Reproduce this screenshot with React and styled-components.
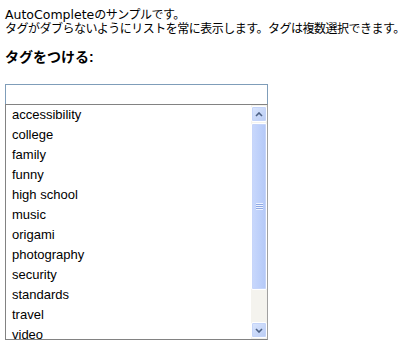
import React from 'react';
import styled, { createGlobalStyle } from 'styled-components';

const GlobalStyle = createGlobalStyle`
  html, body {
    margin: 0;
    padding: 0;
    background: #fff;
  }
  body {
    font-family: "Liberation Sans", "Noto Sans CJK JP", sans-serif;
    color: #000;
  }
`;

const Page = styled.div`
  padding: 8px 5px 0 5px;
`;

const Intro = styled.p`
  margin: 0;
  font-size: 12px;
  line-height: 14px;
  letter-spacing: -0.5px;
  white-space: nowrap;
`;

const Latin = styled.span`
  font-family: "DejaVu Sans", sans-serif;
  font-size: 12.5px;
  letter-spacing: 0;
`;

const Heading = styled.h3`
  margin: 12px 0 0 0;
  font-size: 14px;
  line-height: 18px;
  font-weight: bold;
`;

const TagBox = styled.div`
  margin-top: 18px;
  width: 263px;
`;

const TagInput = styled.input`
  display: block;
  box-sizing: border-box;
  width: 100%;
  height: 20px;
  margin: 0;
  border: 1px solid #7f9db9;
  border-bottom: none;
  padding: 0 3px;
  font-size: 13px;
  font-family: inherit;
  outline: none;
`;

const ListBox = styled.div`
  box-sizing: border-box;
  height: 236px;
  border: 1px solid #828282;
  border-right-color: #a0a0a0;
  display: flex;
  overflow: hidden;
`;

const Items = styled.ul`
  flex: 1;
  margin: 0;
  padding: 0;
  list-style: none;
  overflow: hidden;
`;

const Item = styled.li`
  height: 20px;
  line-height: 20px;
  padding-left: 6px;
  font-size: 13px;
  white-space: nowrap;
`;

const Scrollbar = styled.div`
  width: 16px;
  display: flex;
  flex-direction: column;
  background: #f4f3ee;
  padding: 1px 0 1px 0;
  box-sizing: border-box;
`;

const ArrowButton = styled.div`
  height: 16px;
  box-sizing: border-box;
  border: 1px solid #fff;
  border-radius: 2px;
  background: linear-gradient(135deg, #dae6fe, #b9cbf3);
  box-shadow: inset 0 0 0 1px #c4d4f9;
  display: flex;
  align-items: center;
  justify-content: center;
  flex-shrink: 0;
`;

const Thumb = styled.div`
  height: 167px;
  margin-top: 1px;
  box-sizing: border-box;
  border: 1px solid #fff;
  border-radius: 2px;
  background: linear-gradient(90deg, #c9d8fc, #bccffa 60%, #b4c8f6);
  box-shadow: inset 0 0 0 1px #c6d5fa;
  display: flex;
  align-items: center;
  justify-content: center;
  flex-shrink: 0;
`;

const Track = styled.div`
  flex: 1;
`;

const Grip = styled.div`
  width: 7px;
  height: 7px;
  background: repeating-linear-gradient(180deg, #eef3fe 0 1px, #8ea8e4 1px 2px);
`;

const Chevron = ({ down }) => (
  <svg width="8" height="5" viewBox="0 0 8 5">
    <path
      d={down ? 'M1 1 L4 4 L7 1' : 'M1 4 L4 1 L7 4'}
      fill="none"
      stroke="#4d6185"
      strokeWidth="1.6"
    />
  </svg>
);

const tags = [
  'accessibility',
  'college',
  'family',
  'funny',
  'high school',
  'music',
  'origami',
  'photography',
  'security',
  'standards',
  'travel',
  'video',
];

export default function App() {
  return (
    <Page>
      <GlobalStyle />
      <Intro><Latin>AutoComplete</Latin>のサンプルです。</Intro>
      <Intro>タグがダブらないようにリストを常に表示します。タグは複数選択できます。</Intro>
      <Heading>タグをつける:</Heading>
      <TagBox>
        <TagInput type="text" />
        <ListBox>
          <Items>
            {tags.map(t => (
              <Item key={t}>{t}</Item>
            ))}
          </Items>
          <Scrollbar>
            <ArrowButton><Chevron /></ArrowButton>
            <Thumb><Grip /></Thumb>
            <Track />
            <ArrowButton><Chevron down /></ArrowButton>
          </Scrollbar>
        </ListBox>
      </TagBox>
    </Page>
  );
}
